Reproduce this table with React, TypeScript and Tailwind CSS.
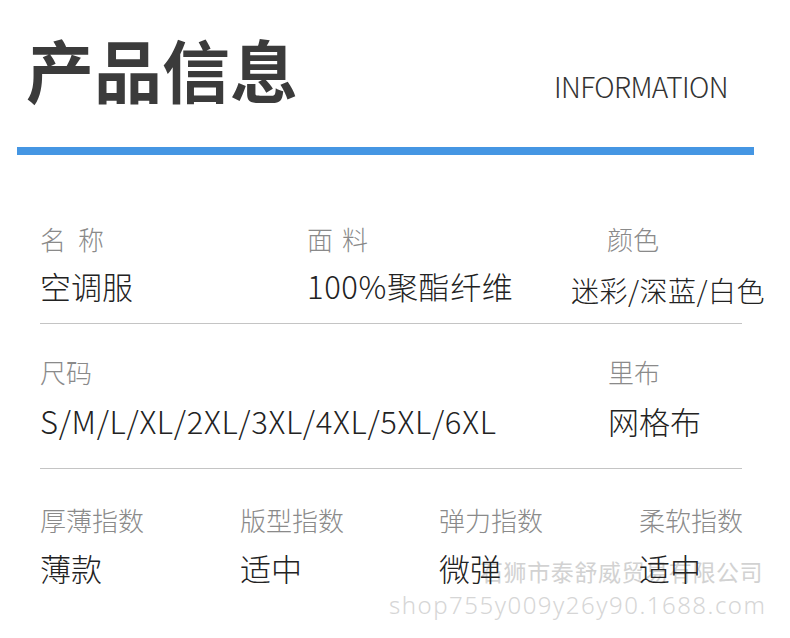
export default function App() {
  return (
    <div className="relative w-[790px] h-[638px] overflow-hidden bg-white font-['Noto_Sans_CJK_SC',sans-serif]">
      {/* header */}
      <div className="flex items-start pl-[26px] pt-[35px]">
        <h1 className="text-[68px] leading-none font-bold text-[#3b3b3b]">产品信息</h1>
        <div className="ml-auto mr-[62px] mt-[37px] text-[28px] leading-none font-light text-[#333] tracking-[-0.6px]">
          INFORMATION
        </div>
      </div>
      <div className="ml-[17px] mt-[44px] h-[8px] w-[737px] bg-[#4596e3]" />

      <div className="mx-[40px] w-[702px]">
        {/* row 1 */}
        <div className="grid grid-cols-[265px_266px_1fr] pt-[71px] pb-[19px] border-b border-[#c4c4c4]">
          <div>
            <div className="text-[26px] leading-none font-light text-[#8a8a8a] tracking-[12px]">名称</div>
            <div className="mt-[18px] text-[31px] leading-none font-light text-[#222]">空调服</div>
          </div>
          <div>
            <div className="pl-[2px] text-[26px] leading-none font-light text-[#8a8a8a] tracking-[9px]">面料</div>
            <div className="mt-[18px] pl-[2px] text-[31px] leading-none font-light text-[#222] tracking-[0.6px]">100%聚酯纤维</div>
          </div>
          <div className="whitespace-nowrap">
            <div className="pl-[36px] text-[26px] leading-none font-light text-[#8a8a8a]">颜色</div>
            <div className="mt-[24px] text-[28px] leading-none font-light text-[#222] tracking-[0.5px]">迷彩/深蓝/白色</div>
          </div>
        </div>

        {/* row 2 */}
        <div className="flex pt-[35px] pb-[32px] border-b border-[#c4c4c4]">
          <div className="w-[568px]">
            <div className="text-[26px] leading-none font-light text-[#8a8a8a]">尺码</div>
            <div className="mt-[20px] text-[31px] leading-none font-light text-[#222] tracking-[0.7px]">S/M/L/XL/2XL/3XL/4XL/5XL/6XL</div>
          </div>
          <div>
            <div className="text-[26px] leading-none font-light text-[#8a8a8a]">里布</div>
            <div className="mt-[20px] text-[31px] leading-none font-light text-[#222]">网格布</div>
          </div>
        </div>

        {/* row 3 */}
        <div className="grid grid-cols-[200px_199px_200px_1fr] pt-[38px]">
          {[
            ["厚薄指数", "薄款"],
            ["版型指数", "适中"],
            ["弹力指数", "微弹"],
            ["柔软指数", "适中"],
          ].map(([label, value]) => (
            <div key={label} className="relative z-10 whitespace-nowrap">
              <div className="text-[26px] leading-none font-light text-[#8a8a8a]">{label}</div>
              <div className="mt-[19px] text-[31px] leading-none font-light text-[#222]">{value}</div>
            </div>
          ))}
        </div>
      </div>

      {/* watermark */}
      <div className="absolute left-[480px] top-[560px] text-[23px] leading-none text-[#d2d2d2] tracking-[0.6px] whitespace-nowrap">
        石狮市泰舒威贸易有限公司
      </div>
      <div className="absolute left-[389px] top-[593px] font-['Noto_Sans',sans-serif] font-light text-[24px] leading-none text-[#d6d6d6] tracking-[1.5px] whitespace-nowrap">
        shop755y009y26y90.1688.com
      </div>
    </div>
  );
}
